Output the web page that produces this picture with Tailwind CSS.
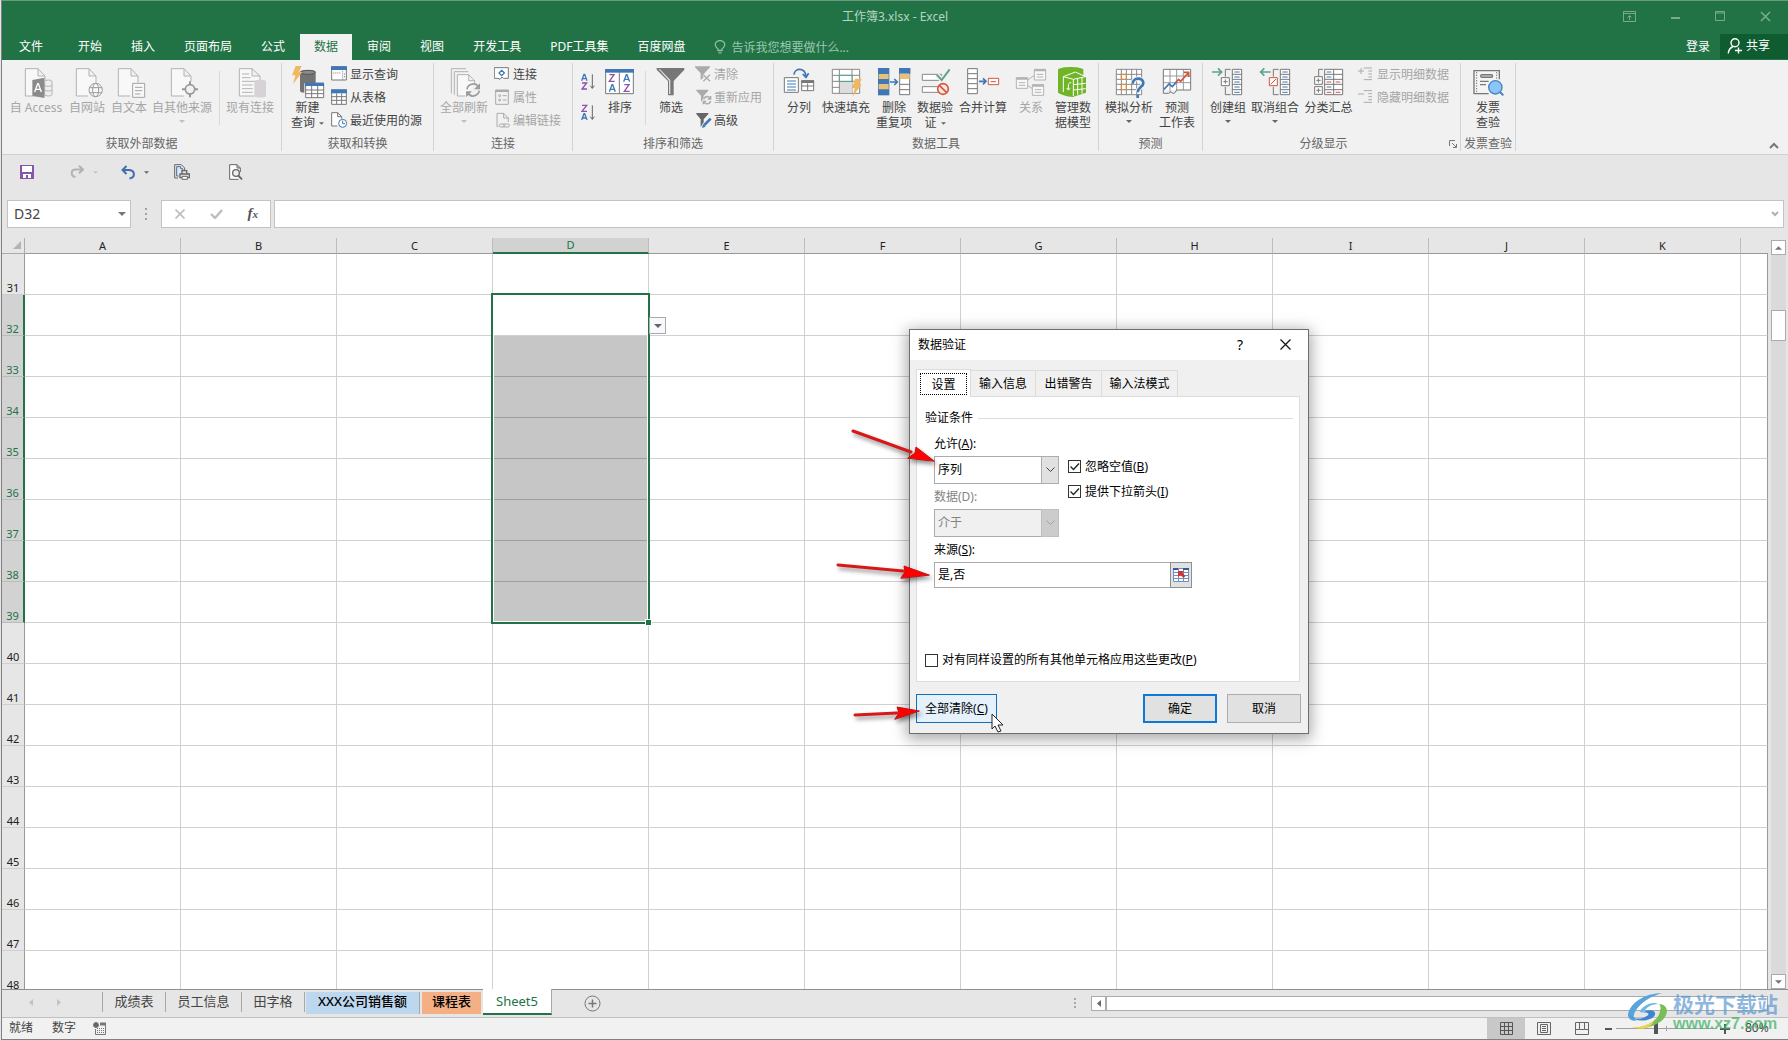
<!DOCTYPE html>
<html lang="zh-CN">
<head>
<meta charset="utf-8">
<title>工作簿3.xlsx - Excel</title>
<script src="https://cdn.jsdelivr.net/npm/@tailwindcss/browser@4"></script>
</head>
<body class="bg-[#e6e6e6] pl-px font-['Noto_Sans','Noto_Sans_CJK_SC',sans-serif] text-[12px] leading-[15px] text-[#444444]">
<div class="relative flex h-screen flex-col overflow-hidden border-b border-l border-[#808080]">

  <!-- Title bar -->
  <header class="relative flex h-[34px] shrink-0 items-center justify-end border-t border-[#6c9a80] bg-[#217346] pb-[2px] text-[#b3d5c1]">
    <h1 class="absolute inset-x-0 text-center">工作簿3.xlsx - Excel</h1>
    <div class="relative flex items-center gap-[34px] pr-[17px]">
      <button aria-label="功能区显示选项"><svg class="h-[11px] w-[13px]" viewBox="0 0 13 11" fill="none" stroke="#75ad8c"><path d="M.5.5h12v10H.5zM.5 2.5h12M6.5 9V4.500M4.500 6.500l2-2 2 2"/></svg></button>
      <button aria-label="最小化"><svg class="h-[11px] w-[11px]" viewBox="0 0 11 11" stroke="#75ad8c" stroke-width="2"><path d="M1 7h9"/></svg></button>
      <button aria-label="最大化"><svg class="h-[11px] w-[11px]" viewBox="0 0 11 11" fill="none" stroke="#75ad8c"><path d="M.5.5h9v9h-9zM.5 2h9" /></svg></button>
      <button aria-label="关闭"><svg class="h-[11px] w-[11px]" viewBox="0 0 11 11" stroke="#75ad8c" stroke-width="1.600"><path d="M1 1l9 9M10 1l-9 9"/></svg></button>
    </div>
  </header>

  <!-- Ribbon tabs -->
  <nav class="flex h-[26px] shrink-0 items-stretch gap-px bg-[#217346] text-white">
    <button class="mr-[3px] px-[17px] pb-[2px]">文件</button>
    <button class="px-[14px] pb-[2px]">开始</button>
    <button class="px-[14px] pb-[2px]">插入</button>
    <button class="px-[14px] pb-[2px]">页面布局</button>
    <button class="px-[14px] pb-[2px]">公式</button>
    <button class="bg-[#f1f1f1] px-[14px] pb-[2px] text-[#217346]">数据</button>
    <button class="px-[14px] pb-[2px]">审阅</button>
    <button class="px-[14px] pb-[2px]">视图</button>
    <button class="px-[14px] pb-[2px]">开发工具</button>
    <button class="px-[14px] pb-[2px]">PDF工具集</button>
    <button class="px-[14px] pb-[2px]">百度网盘</button>
    <button class="flex items-center gap-[5px] pl-[14px] text-[#9bc7ae]">
      <svg class="h-[14px] w-[12px]" viewBox="0 0 12 14" fill="none" stroke="#8fc0a4" stroke-width="1.300"><path d="M4 10.500V9C2.500 8 1.300 7 1.300 4.800a4.700 4.200 0 0 1 9.400 0C10.700 7 9.500 8 8 9v1.500zM4.500 12.800h3"/></svg>
      告诉我您想要做什么...</button>
    <span class="flex-1"></span>
    <button class="px-[9px] pb-[2px]">登录</button>
    <button class="mb-px flex items-center gap-[3px] bg-[#0e5c2f] pr-[18px] pb-[2px] pl-[7px]">
      <svg class="h-[16px] w-[16px]" viewBox="0 0 16 16" fill="none" stroke="#fff" stroke-width="1.400"><circle cx="8" cy="4.800" r="4"/><path d="M6 8.500C3 10 1.500 12 1.300 15.500M8 12.500h7M11.500 9.500v6"/></svg>
      共享</button>
  </nav>

  <!-- Ribbon -->
  <section class="relative flex h-[95px] shrink-0 border-b border-[#cfcfcf] bg-[#f1f1f1] py-[3px]" aria-label="数据">

    <div class="flex w-[280px] shrink-0 flex-col justify-between border-r border-[#d2d2d2]">
      <div class="flex pt-[3px] pl-[4px] text-[#a6a6a6]">
        <button class="flex w-[60px] flex-col items-center gap-[2px]">
          <svg class="size-8 overflow-visible" viewBox="60 198 96 96" fill="none" stroke="#b3b3b3" stroke-width="3"><path fill="#f8f8f8" d="M76 206h38l21 22v60H76zM114 206v22h21"/><path fill="#eee" d="M134 244c0-5 22-5 22 0v40c0 5-22 5-22 0zM134 256c4 4 18 4 22 0M134 270c4 4 18 4 22 0"/><path stroke="none" fill="#8b8b8b" d="M97 240l36-7v61l-36-7z"/><path stroke="#fff" stroke-width="4" d="M104 276l9-25h2l9 25M107 268h14"/></svg>
          <span class="whitespace-nowrap">自 Access</span></button>
        <button class="flex w-[42px] flex-col items-center gap-[2px]">
          <svg class="size-8 overflow-visible" viewBox="213 198 96 96" fill="none" stroke="#b3b3b3" stroke-width="3"><path fill="#f8f8f8" d="M264 288h-35v-82h38l21 22v20M267 206v22h21"/><circle cx="287" cy="270" r="20" fill="#f8f8f8" stroke="#9c9c9c"/><ellipse cx="287" cy="270" rx="9" ry="20" stroke="#9c9c9c"/><path stroke="#9c9c9c" d="M268 263h38M268 278h38"/></svg>
          <span>自网站</span></button>
        <button class="flex w-[42px] flex-col items-center gap-[2px]">
          <svg class="size-8 overflow-visible" viewBox="339 198 96 96" fill="none" stroke="#b3b3b3" stroke-width="3"><path fill="#f8f8f8" d="M390 288h-35v-82h38l21 22v20M393 206v22h21"/><path fill="#f8f8f8" stroke="#a3a3a3" d="M398 250h36v42h-36zM405 262h22M405 272h22M405 282h16"/></svg>
          <span>自文本</span></button>
        <button class="flex w-[64px] flex-col items-center gap-[2px]">
          <svg class="size-8 overflow-visible" viewBox="498 198 96 96" fill="none" stroke="#b3b3b3" stroke-width="3"><path fill="#f8f8f8" d="M552 288h-38v-82h38l21 22v16M552 206v22h21"/><circle cx="570" cy="268" r="14" fill="#f1f1f1" stroke="#979797" stroke-width="5"/><path stroke="#979797" stroke-width="6" d="M570 244v10M570 282v10M546 268h10M584 268h10"/></svg>
          <span class="whitespace-nowrap">自其他来源</span>
          <svg class="mt-[3px] h-[3px] w-[6px]" viewBox="0 0 6 3" fill="#c0c0c0"><path d="M0 0h6L3 3z"/></svg></button>
        <span class="mt-[5px] ml-[5px] h-[54px] w-px bg-[#d9d9d9]"></span>
        <button class="ml-[2px] flex w-[56px] flex-col items-center gap-[2px]">
          <svg class="size-8 overflow-visible" viewBox="702 198 96 96" fill="none" stroke="#b3b3b3" stroke-width="3"><path fill="#f8f8f8" d="M763 288h-45v-82h38l24 22v14M756 206v22h24M726 222h22M726 233h26M726 244h40M726 255h32M726 266h32M726 277h32"/><path stroke="none" fill="#d6d2d6" d="M763 244c0-6 35-6 35 0v44c0 6-35 6-35 0z"/></svg>
          <span>现有连接</span></button>
      </div>
      <h2 class="h-[18px] text-center leading-[22px] text-[#666]">获取外部数据</h2>
    </div>

    <div class="flex w-[152px] shrink-0 flex-col justify-between border-r border-[#d2d2d2]">
      <div class="flex">
        <button class="mt-[3px] ml-[2px] flex w-[47px] flex-col items-center gap-[2px]">
          <svg class="size-8 overflow-visible" viewBox="873 198 96 96" fill="none" stroke-width="3"><path fill="#737373" d="M897 216c0-8 47-8 47 0v34h-34v28c-8 0-13-3-13-6z"/><ellipse cx="921" cy="217" rx="22" ry="6" fill="#8b8b8b" stroke="#555"/><path fill="#f0b860" d="M884 198h18l-8 18h10l-28 36 7-26h-10z"/><path fill="#fff" stroke="#777" d="M914 250h54v43h-54zM914 270h54M914 281h54M932 258v35M950 258v35"/><path fill="#3f78b5" d="M912 248h57v10h-57z"/></svg>
          <span>新建<br>查询 <svg class="ml-px inline h-[3px] w-[5px] align-middle" viewBox="0 0 6 3" fill="#666"><path d="M0 0h6L3 3z"/></svg></span></button>
        <div class="text-[#444]">
          <button class="flex h-[23px] items-center gap-[2px]"><svg class="size-[17px]" viewBox="993 198 51 51" fill="none" stroke="#777" stroke-width="3"><path fill="#fff" d="M995 200h44v40h-44z"/><path stroke="none" fill="#3f78b5" d="M993 199h48v11h-48z"/><path stroke-dasharray="3 3" d="M1000 219h22M1028 214v26M1032 222h6M1032 230h6"/></svg>显示查询</button>
          <button class="flex h-[23px] items-center gap-[2px]"><svg class="size-[17px]" viewBox="993 267 51 51" fill="none" stroke="#777" stroke-width="3"><path fill="#fff" d="M995 270h44v43h-44zM995 290h44M995 301h44M1010 280v33M1025 280v33"/><path stroke="none" fill="#3f78b5" d="M993 268h48v12h-48z"/></svg>从表格</button>
          <button class="flex h-[23px] items-center gap-[2px]"><svg class="size-[17px]" viewBox="993 336 51 51" fill="none" stroke="#777" stroke-width="3"><path fill="#fff" d="M1012 378h-17v-40h18l12 12v6M1013 338v12h12"/><circle cx="1028" cy="370" r="12" fill="#fff" stroke="#3f78b5"/><path stroke="#3f78b5" d="M1028 362v9h7"/></svg>最近使用的源</button>
        </div>
      </div>
      <h2 class="h-[18px] text-center leading-[22px] text-[#666]">获取和转换</h2>
    </div>

    <div class="flex w-[139px] shrink-0 flex-col justify-between border-r border-[#d2d2d2]">
      <div class="flex text-[#a6a6a6]">
        <button class="mt-[3px] flex w-[60px] flex-col items-center gap-[2px]">
          <svg class="size-8 overflow-visible" viewBox="54 198 96 96" fill="none" stroke="#b3b3b3" stroke-width="3"><path d="M64 280v-74h44M73 284v-69h42"/><path fill="#f8f8f8" d="M105 288H82v-64h34l18 18v8M116 224v18h18"/><path stroke="#9c9c9c" stroke-width="5" d="M111 268c2-18 28-22 34-6M148 272c-4 18-28 22-34 6"/><path stroke="none" fill="#9c9c9c" d="M150 250v18h-18zM108 292v-18h18z"/></svg>
          <span>全部刷新</span>
          <svg class="mt-[3px] h-[3px] w-[6px]" viewBox="0 0 6 3" fill="#c0c0c0"><path d="M0 0h6L3 3z"/></svg></button>
        <div>
          <button class="flex h-[23px] items-center gap-[2px] text-[#444]"><svg class="size-[17px]" viewBox="192 198 51 51" fill="none" stroke="#777" stroke-width="3"><path fill="#fff" d="M193 203h42v32h-14l-5-4-6 7-6-3h-11z"/><path stroke="#3f78b5" stroke-width="4" d="M215 211l8 8-8 8-8-8z"/></svg>连接</button>
          <button class="flex h-[23px] items-center gap-[2px]"><svg class="size-[17px]" viewBox="192 267 51 51" fill="none" stroke="#aaa" stroke-width="3"><path d="M197 270h38v43h-38zM218 287h12M218 300h12"/><path stroke-width="6" d="M196 273h40"/><circle cx="209" cy="287" r="3"/><circle cx="209" cy="300" r="3"/></svg>属性</button>
          <button class="flex h-[23px] items-center gap-[2px]"><svg class="size-[17px]" viewBox="192 336 51 51" fill="none" stroke="#aaa" stroke-width="3"><path d="M205 380h-4v-40h20l14 14v12M221 340v14h14"/><rect x="208" y="372" width="16" height="9" rx="4"/><rect x="220" y="372" width="18" height="9" rx="4"/></svg>编辑链接</button>
        </div>
      </div>
      <h2 class="h-[18px] text-center leading-[22px] text-[#666]">连接</h2>
    </div>

    <div class="flex w-[201px] shrink-0 flex-col justify-between border-r border-[#d2d2d2]">
      <div class="flex">
        <div class="flex w-[27px] flex-col items-center gap-[13px] pt-[10px] pl-[3px]">
          <button aria-label="升序"><svg class="block h-[18px] w-[15px]" viewBox="0 0 45 54" fill="none" stroke-width="4"><path stroke="#3f78b5" d="M2 23L9 4h2l7 19M5 17h11"/><path stroke="#8c53a8" d="M3 30h14L3 48h15"/><path stroke="#666" stroke-width="3" d="M34 4v42M28 38l6 8 6-8"/></svg></button>
          <button aria-label="降序"><svg class="block h-[18px] w-[15px]" viewBox="0 0 45 54" fill="none" stroke-width="4"><path stroke="#8c53a8" d="M3 4h14L3 22h15"/><path stroke="#3f78b5" d="M2 48l7-19h2l7 19M5 42h11"/><path stroke="#666" stroke-width="3" d="M34 4v42M28 38l6 8 6-8"/></svg></button>
        </div>
        <button class="mt-[3px] flex w-[40px] flex-col items-center gap-[2px]">
          <svg class="size-8 overflow-visible" viewBox="522 198 96 96" fill="none" stroke-width="4"><path fill="#fff" stroke="#777" stroke-width="3" d="M527 210h83v71h-83zM568 218v63"/><path fill="#3f78b5" d="M525 207h87v11h-87z"/><path stroke="#8c53a8" d="M538 224h14l-14 20h16M583 254h14l-14 20h16"/><path stroke="#3f78b5" d="M538 275l8-21h2l8 21M541 268h12M581 245l8-21h2l8 21M584 238h12"/></svg>
          <span>排序</span></button>
        <span class="mt-[8px] ml-[5px] h-[54px] w-px bg-[#d9d9d9]"></span>
        <button class="mt-[3px] ml-px flex w-[48px] flex-col items-center gap-[2px]">
          <svg class="size-8 overflow-visible" viewBox="675 198 96 96" fill="#777"><path d="M680 204h83v5l-32 34v43h-17v-43l-34-34z"/><path d="M686 208l31 34v40h4v-42l-31-32z" fill="#dedede"/></svg>
          <span>筛选</span></button>
        <div class="text-[#a6a6a6]">
          <button class="flex h-[23px] items-center gap-[2px]"><svg class="size-[17px]" viewBox="795 198 51 51" fill="#aaa"><path d="M795 199h45v3l-17 18v10l-11 10v-20l-17-18z"/><path fill="none" stroke="#f1f1f1" stroke-width="9" d="M820 224l20 20M840 224l-20 20"/><path fill="none" stroke="#aaa" stroke-width="4" d="M820 224l20 20M840 224l-20 20"/></svg>清除</button>
          <button class="flex h-[23px] items-center gap-[2px]"><svg class="size-[17px]" viewBox="795 267 51 51" fill="#aaa"><path d="M799 269h36v3l-14 15v8l-8 12v-20l-14-15z"/><circle cx="831" cy="301" r="13" fill="#f1f1f1"/><path fill="none" stroke="#aaa" stroke-width="4" d="M821 298c3-11 17-11 20-2M842 303c-3 11-17 11-20 2M842 288v9h-9M820 313v-9h9"/></svg>重新应用</button>
          <button class="flex h-[23px] items-center gap-[2px] text-[#444]"><svg class="size-[17px]" viewBox="795 336 51 51" fill="#666"><path d="M799 339h36v3l-14 16v12l-9 10v-22l-13-16z"/><path fill="none" stroke="#f1f1f1" stroke-width="12" d="M820 378l20-21"/><path fill="none" stroke="#3f78b5" stroke-width="8" d="M822 376l20-20"/><path fill="#3f78b5" d="M816 384l3-11 8 7z"/></svg>高级</button>
        </div>
      </div>
      <h2 class="h-[18px] text-center leading-[22px] text-[#666]">排序和筛选</h2>
    </div>

    <div class="flex w-[325px] shrink-0 flex-col justify-between border-r border-[#d2d2d2]">
      <div class="flex items-start pt-[3px] pl-[8px]">
        <button class="flex w-[34px] flex-col items-center gap-[2px]">
          <svg class="size-8 overflow-visible" viewBox="9 198 96 96" fill="none" stroke="#777" stroke-width="3"><path fill="#fff" d="M13 233h42v44H13z"/><path stroke="#3f78b5" d="M21 243h27M21 252h27M21 261h27M21 270h27"/><path fill="#fff" d="M65 242h36v30H65zM65 258h36M83 250v22"/><path stroke-width="8" d="M64 245h38"/><path stroke="#3f78b5" stroke-width="5" d="M42 224c2-22 34-22 36 6M68 222l10 10 8-12"/></svg>
          <span>分列</span></button>
        <button class="flex w-[60px] flex-col items-center gap-[2px]">
          <svg class="size-8 overflow-visible" viewBox="150 198 96 96" fill="none" stroke="#888" stroke-width="3"><path fill="#fff" d="M157 208h82v72h-82zM157 226h82M157 244h82M157 262h82M178 208v72M216 208v72"/><path fill="#ddd" stroke="none" d="M180 246h36v33h-36z"/><path fill="#fff" stroke="#4b9a86" d="M178 226h38v18h-38z"/><path stroke="none" fill="#f0b860" d="M225 236h20l-8 18h8l-28 36 7-25h-8z"/></svg>
          <span>快速填充</span></button>
        <button class="flex w-[36px] flex-col items-center gap-[2px]">
          <svg class="size-8 overflow-visible" viewBox="294 198 96 96" fill="none" stroke-width="3"><path fill="#3f78b5" d="M294 204h34v82h-34z"/><path fill="#e8c078" d="M296 222h30v15h-30zM296 252h30v16h-30z"/><path fill="#fff" stroke="#777" d="M359 206h30v78h-30zM359 253h30M359 269h30"/><path fill="#3f78b5" d="M357 204h34v17h-34z"/><path fill="#e8c078" d="M359 222h30v15h-30z"/><path stroke="#3f78b5" stroke-width="5" d="M330 246h22M343 237l9 9-9 9"/></svg>
          <span class="whitespace-nowrap">删除<br>重复项</span></button>
        <button class="flex w-[46px] flex-col items-center gap-[2px]">
          <svg class="size-8 overflow-visible" viewBox="417 198 96 96" fill="none" stroke="#888" stroke-width="3"><path fill="#fff" d="M427 223h58v18h-58zM427 260h58v17h-58z"/><path stroke="#f1f1f1" stroke-width="14" d="M470 224l15 16 24-32"/><path stroke="#5fa28a" stroke-width="6" d="M470 224l15 16 24-32"/><circle cx="489" cy="267" r="16" fill="#f8e8e4" stroke="#d6553f" stroke-width="5"/><path stroke="#d6553f" stroke-width="5" d="M478 256l22 22"/></svg>
          <span>数据验<br>证 <svg class="ml-px inline h-[3px] w-[5px] align-middle" viewBox="0 0 6 3" fill="#666"><path d="M0 0h6L3 3z"/></svg></span></button>
        <button class="flex w-[50px] flex-col items-center gap-[2px]">
          <svg class="size-8 overflow-visible" viewBox="561 198 96 96" fill="none" stroke="#777" stroke-width="3"><path fill="#fff" d="M563 206h29v75h-29zM563 221h29M563 236h29M563 251h29M563 266h29"/><path fill="#fff" stroke="#d6553f" d="M625 235h31v19h-31zM632 245h16"/><path stroke="#3f78b5" stroke-width="5" d="M597 244h20M609 235l9 9-9 9"/></svg>
          <span>合并计算</span></button>
        <button class="flex w-[46px] flex-col items-center gap-[2px] text-[#a6a6a6]">
          <svg class="size-8 overflow-visible" viewBox="705 198 96 96" fill="none" stroke="#b3b3b3" stroke-width="3"><path d="M743 240l20-14M743 256l14 10"/><path fill="#f8f8f8" d="M709 233h34v32h-34zM763 208h34v32h-34zM757 254h34v32h-34zM716 248h20M716 256h20M770 223h20M770 231h20M764 269h20M764 277h20"/><path stroke-width="6" d="M709 236h34M763 211h34M757 257h34"/></svg>
          <span>关系</span></button>
        <button class="flex w-[38px] flex-col items-center gap-[2px]">
          <svg class="size-8 overflow-visible" viewBox="831 198 96 96" fill="none" stroke="#fff" stroke-width="3"><path stroke="none" fill="#6fb526" d="M834 208c14-9 62-9 76 0v18l8 6v46l-40 13c-18-2-34-7-44-13z"/><path d="M850 276v-46l36-14 31 14M850 230l30 8v50M880 238l36-8M880 254l37-4M880 270l37-4M893 236v48M906 233v48"/><path d="M874 248c-8 0-9 4-9 10v10M860 264l5 6 6-5"/></svg>
          <span class="whitespace-nowrap">管理数<br>据模型</span></button>
      </div>
      <h2 class="h-[18px] text-center leading-[22px] text-[#666]">数据工具</h2>
    </div>

    <div class="flex w-[104px] shrink-0 flex-col justify-between border-r border-[#d2d2d2]">
      <div class="flex items-start pt-[3px] pl-[3px]">
        <button class="flex w-[54px] flex-col items-center gap-[2px]">
          <svg class="size-8 overflow-visible" viewBox="999 198 96 96" fill="none" stroke="#888" stroke-width="3"><path fill="#fff" d="M1009 208h76v76h-76zM1009 223h76M1009 238h76M1009 253h76M1009 269h76M1024 208v76M1039 208v76M1055 208v76M1070 208v76"/><path stroke="#e08a35" d="M1024 223h15v15h-15zM1024 253h15v16h-15z"/><path stroke="#f1f1f1" stroke-width="14" d="M1058 251c0-20 32-20 32-2 0 12-17 13-17 28"/><path stroke="#3f78b5" stroke-width="8" d="M1058 251c0-20 32-20 32-2 0 12-17 13-17 28M1073 284v10"/></svg>
          <span>模拟分析</span>
          <svg class="mt-[3px] h-[3px] w-[6px]" viewBox="0 0 6 3" fill="#666"><path d="M0 0h6L3 3z"/></svg></button>
        <button class="flex w-[42px] flex-col items-center gap-[2px]">
          <svg class="size-8 overflow-visible" viewBox="1143 198 96 96" fill="none" stroke="#999" stroke-width="3"><path fill="#fff" stroke="none" d="M1150 208h82v62h-82z"/><path d="M1150 228h82M1150 248h82M1170 208v70M1190 208v66M1210 208v62"/><path stroke="#777" d="M1194 270h38v-62h-82v72h16l6-4 10 5 8-11h4"/><path stroke="#3f78b5" stroke-width="5" d="M1152 268l15-16 10 8 14-16"/><path stroke="#d6553f" stroke-width="5" d="M1188 246l8-8 6 6 22-24M1212 217h14v14"/></svg>
          <span class="whitespace-nowrap">预测<br>工作表</span></button>
      </div>
      <h2 class="h-[18px] text-center leading-[22px] text-[#666]">预测</h2>
    </div>

    <div class="flex w-[258px] shrink-0 flex-col justify-between border-r border-[#d2d2d2]">
      <div class="flex items-start pl-[3px]">
        <button class="mt-[3px] flex w-[44px] flex-col items-center gap-[2px]">
          <svg class="size-8 overflow-visible" viewBox="366 198 96 96" fill="none" stroke="#777" stroke-width="3"><path fill="#fff" d="M427 208h28v76h-28zM427 223h28M427 238h28M427 253h28M427 269h28"/><path stroke="#3f78b5" d="M433 216h16M433 231h16M433 246h16M433 261h16M433 277h16"/><path d="M422 208h-16v22M406 260v24h16"/><path fill="#fff" d="M394 233h24v24h-24zM400 245h13M406 238v13"/><path stroke="#5fa28a" stroke-width="5" d="M366 216h28M384 205l11 11-11 11"/></svg>
          <span>创建组</span>
          <svg class="mt-[3px] h-[3px] w-[6px]" viewBox="0 0 6 3" fill="#666"><path d="M0 0h6L3 3z"/></svg></button>
        <button class="mt-[3px] flex w-[50px] flex-col items-center gap-[2px]">
          <svg class="size-8 overflow-visible" viewBox="507 198 96 96" fill="none" stroke="#777" stroke-width="3"><path fill="#fff" d="M571 208h28v76h-28zM571 223h28M571 238h28M571 253h28M571 269h28"/><path stroke="#3f78b5" d="M577 216h16M577 231h16M577 246h16M577 261h16M577 277h16"/><path d="M566 208h-16v22M550 260v24h16"/><path fill="#fff" stroke="#d6553f" d="M538 233h24v24h-24zM542 253l16-16"/><path stroke="#5fa28a" stroke-width="5" d="M512 216h30M523 205l-11 11 11 11"/></svg>
          <span class="whitespace-nowrap">取消组合</span>
          <svg class="mt-[3px] h-[3px] w-[6px]" viewBox="0 0 6 3" fill="#666"><path d="M0 0h6L3 3z"/></svg></button>
        <button class="mt-[3px] flex w-[57px] flex-col items-center gap-[2px]">
          <svg class="size-8 overflow-visible" viewBox="666 198 96 96" fill="none" stroke="#777" stroke-width="3"><path fill="#fff" d="M701 208h54v76h-54zM701 223h54M701 238h54M701 253h54M701 269h54M728 208v76"/><path stroke="#3f78b5" d="M707 216h14M707 231h14M707 261h14"/><path stroke="#d6553f" d="M707 246h14M734 246h14M707 277h14M734 277h14"/><path d="M696 208h-13v20"/><path fill="#fff" d="M671 230h23v23h-23zM671 260h23v23h-23zM676 241h13M682 235v13M676 271h13M682 265v13"/></svg>
          <span>分类汇总</span></button>
        <div class="text-[#a6a6a6]">
          <button class="flex h-[23px] items-center gap-[3px]"><svg class="size-[17px]" viewBox="804 198 51 51" fill="none" stroke="#aaa" stroke-width="3"><path d="M807 213h18M816 204v18M824 204h25M838 213h11M838 222h11M838 231h11M824 239h25"/></svg>显示明细数据</button>
          <button class="flex h-[23px] items-center gap-[3px]"><svg class="size-[17px]" viewBox="804 267 51 51" fill="none" stroke="#aaa" stroke-width="3"><path d="M807 282h18M824 272h25M838 281h11M838 290h11M838 299h11M824 307h25"/></svg>隐藏明细数据</button>
        </div>
      </div>
      <div class="flex items-center pr-[3px]">
        <h2 class="h-[18px] flex-1 pr-[5px] text-center leading-[22px] text-[#666]">分级显示</h2>
        <button aria-label="分级显示设置"><svg class="mt-[3px] h-[8px] w-[8px]" viewBox="0 0 8 8" fill="none" stroke="#777"><path d="M.5 6V.5H6M3 3l4 4M7.500 4v3.500H4"/></svg></button>
      </div>
    </div>

    <div class="flex w-[55px] shrink-0 flex-col justify-between border-r border-[#d2d2d2]">
      <button class="mt-[3px] flex flex-col items-center gap-[2px]">
        <svg class="size-8 overflow-visible" viewBox="96 198 96 96" fill="none" stroke="#777" stroke-width="4"><path fill="#f4f4f4" d="M146 281h-44v-69h76v26"/><path stroke-dasharray="4 4" stroke-width="3" d="M110 216v62M170 216v20"/><rect x="122" y="224" width="36" height="8" rx="4" fill="#bbb"/><path d="M120 244h26M120 254h18"/><circle cx="166" cy="262" r="20" fill="#8cc6f8" stroke="#4684bd"/><path stroke="#4684bd" stroke-width="6" d="M180 276l10 10"/></svg>
        <span>发票<br>查验</span></button>
      <h2 class="h-[18px] text-center leading-[22px] whitespace-nowrap text-[#666]">发票查验</h2>
    </div>
    <span class="flex-1"></span>
    <button class="mr-[9px] mb-px self-end" aria-label="折叠功能区"><svg class="block h-[9px] w-[10px]" viewBox="0 0 10 9" fill="none" stroke="#777" stroke-width="2"><path d="M1 7l4-4 4 4"/></svg></button>
  </section>

  <!-- Quick access toolbar -->
  <div class="flex h-[45px] shrink-0 items-center pb-[11px] pl-[18px]">
    <button aria-label="保存"><svg class="block h-[14px] w-[14px]" viewBox="0 0 14 14" fill="#8457a8"><path d="M0 0h14v14H0z"/><path fill="#fff" d="M2 1h10v6H2zM3 9h8v4H8v-3H6v3H3z"/></svg></button>
    <button class="ml-[36px]" aria-label="重做"><svg class="block h-[14px] w-[14px]" viewBox="0 0 14 14" fill="none" stroke="#b3b3b3" stroke-width="2"><path d="M13 4.500H5.500c-5 0-5 7 0 7.500M9 .7l4 3.800-4 3.800"/></svg></button>
    <svg class="ml-[9px] h-[3px] w-[5px]" viewBox="0 0 6 3" fill="#c4c4c4"><path d="M0 0h6L3 3z"/></svg>
    <button class="ml-[23px]" aria-label="撤消"><svg class="block h-[15px] w-[14px]" viewBox="0 0 14 15" fill="none" stroke="#3f6fae" stroke-width="2"><path d="M1 5h6.500c7 0 7 7.500 1 8.500M5.500 1L1.500 5l4 4"/></svg></button>
    <svg class="ml-[9px] h-[3px] w-[5px]" viewBox="0 0 6 3" fill="#666"><path d="M0 0h6L3 3z"/></svg>
    <button class="ml-[25px]" aria-label="快速打印"><svg class="block h-[17px] w-[16px]" viewBox="0 0 48 51" fill="none" stroke="#666" stroke-width="3"><path d="M12 42H2V2h20l10 10v6"/><path stroke="#3f6fae" d="M14 36H8V8h12v6h6v6"/><path fill="#e6e6e6" stroke-width="4" d="M24 20h14v10H24zM18 30h28v11H18z"/><path fill="#fff" d="M24 37h16v9H24z"/></svg></button>
    <button class="ml-[39px]" aria-label="打印预览"><svg class="block h-[17px] w-[14px]" viewBox="0 0 42 51" fill="none" stroke="#666" stroke-width="3"><path fill="#fff" d="M28 46H2V2h22l10 10v12M24 2v10h10"/><circle cx="21" cy="27" r="10" fill="#eee" stroke-width="4"/><path stroke-width="6" d="M28 35l11 11"/></svg></button>
  </div>

  <!-- Formula bar -->
  <div class="mb-[10px] flex h-[28px] shrink-0 items-stretch pr-[4px] pl-[5px]">
    <div class="flex w-[124px] items-center justify-between border border-[#c3c3c3] bg-white pr-[4px]">
      <input class="w-[106px] pb-[2px] pl-[6px] text-[14px] outline-none" aria-label="名称框" value="D32">
      <svg class="h-[4px] w-[8px]" viewBox="0 0 8 4" fill="#777"><path d="M0 0h8L4 4z"/></svg>
    </div>
    <svg class="mx-[14px] h-[12px] w-[2px] self-center" viewBox="0 0 2 12" fill="#a0a0a0"><path d="M0 0h2v2H0zM0 5h2v2H0zM0 10h2v2H0z"/></svg>
    <div class="flex w-[110px] items-center justify-between border border-[#c3c3c3] bg-white pr-[12px] pl-[13px]">
      <button aria-label="取消输入"><svg class="block h-[10px] w-[10px]" viewBox="0 0 10 10" stroke="#bdbdbd" stroke-width="1.600"><path d="M.5.5l9 9M9.500.5l-9 9"/></svg></button>
      <button aria-label="输入"><svg class="block h-[10px] w-[13px]" viewBox="0 0 13 10" fill="none" stroke="#bdbdbd" stroke-width="2.400"><path d="M1 5l4 4 7-8"/></svg></button>
      <button class="font-['Liberation_Serif',serif] text-[15px] font-bold text-[#555] italic">f<span class="text-[11px]">x</span></button>
    </div>
    <div class="ml-[3px] flex flex-1 items-center border border-[#c3c3c3] bg-white pr-[4px]">
      <input class="flex-1 px-[6px] outline-none" aria-label="编辑栏">
      <svg class="h-[6px] w-[8px]" viewBox="0 0 8 6" fill="none" stroke="#b0b0b0" stroke-width="2"><path d="M1 1l3 3 3-3"/></svg>
    </div>
  </div>

  <!-- Worksheet -->
  <main class="relative flex min-h-0 flex-1 overflow-hidden">
    <div class="relative min-w-0 flex-1 overflow-hidden">
      <table class="w-full table-fixed border-separate border-spacing-0 text-[11px] text-[#222]">
        <thead>
          <tr id="columns">
            <th class="h-[16px] w-[23px] border-r border-b border-[#ababab] p-0"><svg class="mb-[2px] ml-auto mr-[3px] h-[8px] w-[8px]" viewBox="0 0 8 8" fill="#b4b4b4"><path d="M8 0v8H0z"/></svg></th>
          </tr>
        </thead>
        <tbody id="rows"></tbody>
      </table>

      <!-- Selection D32:D39 -->
      <div class="pointer-events-none absolute top-[55px] left-[489px] h-[331px] w-[159px] border-2 border-[#217346] shadow-[inset_0_0_0_1px_#fff]">
        <span class="absolute -right-[4px] -bottom-[4px] size-[7px] border border-white bg-[#217346]"></span>
      </div>
      <button class="absolute top-[79px] left-[647px] flex size-[17px] items-center justify-center border border-[#ababab] bg-[#f8f9fc]" aria-label="下拉列表"><svg class="h-[4px] w-[8px]" viewBox="0 0 8 4" fill="#666"><path d="M0 0h8L4 4z"/></svg></button>
    </div>

    <!-- Vertical scroll bar -->
    <div class="flex w-[20px] shrink-0 flex-col pt-[2px] pr-[2px] pl-[3px]">
      <button class="flex h-[15px] items-center justify-center border border-[#ababab] bg-white" aria-label="向上"><svg class="h-[4px] w-[7px]" viewBox="0 0 8 4" fill="#777"><path d="M0 4h8L4 0z"/></svg></button>
      <div class="flex-1 bg-[#dadada] pt-[55px]"><div class="h-[31px] border border-[#ababab] bg-white"></div></div>
      <button class="flex h-[15px] items-center justify-center border border-[#ababab] bg-white" aria-label="向下"><svg class="h-[4px] w-[7px]" viewBox="0 0 8 4" fill="#777"><path d="M0 0h8L4 4z"/></svg></button>
    </div>

    <!-- Data validation dialog -->
    <form class="absolute top-[91px] left-[907px] flex h-[405px] w-[400px] flex-col border border-[#6e6e6e] bg-[#f0f0f0] text-black shadow-[0_3px_14px_2px_rgba(0,0,0,0.350)]" role="dialog" aria-label="数据验证" onsubmit="return false">
      <div class="flex h-[30px] items-center bg-white pr-px pb-[2px] pl-[8px]">
        <h2 class="flex-1">数据验证</h2>
        <button type="button" class="w-[46px] text-[14px]" aria-label="帮助">?</button>
        <button type="button" class="flex w-[44px] justify-center" aria-label="关闭对话框"><svg class="h-[11px] w-[11px]" viewBox="0 0 11 11" stroke="#111" stroke-width="1.200"><path d="M.5.5l10 10M10.500.5l-10 10"/></svg></button>
      </div>
      <div class="flex flex-1 flex-col pt-[9px] pr-[7px] pb-[10px] pl-[6px]">
        <div class="flex items-end pr-px" role="tablist">
          <button type="button" role="tab" class="relative -mb-px h-[28px] w-[55px] border border-b-0 border-[#dcdcdc] bg-white p-[3px]"><span class="flex h-[22px] items-center justify-center border border-dotted border-black">设置</span></button>
          <button type="button" role="tab" class="h-[26px] w-[65px] border-t border-r border-[#dcdcdc]">输入信息</button>
          <button type="button" role="tab" class="h-[26px] w-[66px] border-t border-r border-[#dcdcdc]">出错警告</button>
          <button type="button" role="tab" class="h-[26px] w-[76px] border-t border-r border-[#dcdcdc]">输入法模式</button>
        </div>
        <div class="mr-px flex h-[286px] flex-col border border-[#dcdcdc] bg-white pt-[12px] pr-[6px] pb-[12px] pl-[8px] leading-[18px]">
          <div class="flex items-center gap-[5px]"><h3>验证条件</h3><span class="h-px flex-1 bg-[#dcdcdc]"></span></div>
          <div class="mt-[8px] flex pl-[9px]">
            <div class="flex w-[125px] flex-col">
              <label for="allow">允许(<u>A</u>):</label>
              <div class="relative mt-[3px]">
                <select id="allow" class="block h-[28px] w-full appearance-none border border-[#ababab] bg-white pl-[3px]"><option>序列</option></select>
                <span class="pointer-events-none absolute inset-y-0 right-0 flex w-[18px] items-center justify-center border border-[#adadad] bg-[#e1e1e1]"><svg class="h-[6px] w-[9px]" viewBox="0 0 9 6" fill="none" stroke="#444"><path d="M.5.5l4 4 4-4"/></svg></span>
              </div>
              <label for="data" class="mt-[4px] text-[#838383]">数据(D):</label>
              <div class="relative mt-[3px]">
                <select id="data" disabled class="block h-[28px] w-full appearance-none border border-[#ababab] bg-[#f0f0f0] pl-[3px] text-[#838383] opacity-100"><option>介于</option></select>
                <span class="pointer-events-none absolute inset-y-0 right-0 flex w-[18px] items-center justify-center border border-[#bfbfbf] bg-[#cccccc]"><svg class="h-[6px] w-[9px]" viewBox="0 0 9 6" fill="none" stroke="#a0a0a0"><path d="M.5.5l4 4 4-4"/></svg></span>
              </div>
              <label for="source" class="mt-[4px]">来源(<u>S</u>):</label>
            </div>
            <div class="pt-[19px] pl-[9px]">
              <label class="flex h-[25px] items-center gap-[4px]"><span class="grid size-[13px]"><input type="checkbox" checked class="col-start-1 row-start-1 size-[13px] appearance-none border border-[#333] bg-white"><svg class="pointer-events-none col-start-1 row-start-1 size-[13px]" viewBox="0 0 13 13" fill="none" stroke="#222" stroke-width="1.300"><path d="M2.500 6.500l3 3 5.500-6"/></svg></span><span>忽略空值(<u>B</u>)</span></label>
              <label class="flex h-[25px] items-center gap-[4px]"><span class="grid size-[13px]"><input type="checkbox" checked class="col-start-1 row-start-1 size-[13px] appearance-none border border-[#333] bg-white"><svg class="pointer-events-none col-start-1 row-start-1 size-[13px]" viewBox="0 0 13 13" fill="none" stroke="#222" stroke-width="1.300"><path d="M2.500 6.500l3 3 5.500-6"/></svg></span><span>提供下拉箭头(<u>I</u>)</span></label>
            </div>
          </div>
          <div class="mt-[3px] ml-[9px] flex h-[26px] w-[258px] border border-[#ababab]">
            <input id="source" class="min-w-0 flex-1 pl-[3px] outline-none" value="是,否">
            <button type="button" class="-my-px -mr-px flex w-[22px] items-center justify-center border border-[#8f8f8f] bg-[#e1e1e1]" aria-label="选择区域"><svg class="h-[14px] w-[16px]" viewBox="0 0 16 14"><path fill="#fff" stroke="#6c8fc4" d="M.5.5h15v13H.5zM.5 4.500h15M.5 7.500h15M.5 10.500h15M5.500.5v13M10.500.5v13"/><path fill="#34599c" d="M0 0h5v2H0zM10 0h6v2h-6z"/><path fill="#d8332a" d="M5 3h6L9.500 5l3 3-2 2-3-3L5 9z"/></svg></button>
          </div>
          <label class="mt-auto flex items-center gap-[4px]"><input type="checkbox" class="size-[13px] appearance-none border border-[#333] bg-white"><span>对有同样设置的所有其他单元格应用这些更改(<u>P</u>)</span></label>
        </div>
        <div class="mt-auto flex gap-[10px]">
          <button type="button" class="mr-auto h-[29px] w-[81px] border border-[#0f6fc0] bg-[#e5f1fb]">全部清除(<u>C</u>)</button>
          <button class="h-[29px] w-[74px] border-2 border-[#0f78d4] bg-[#e1e1e1]">确定</button>
          <button type="button" class="h-[29px] w-[74px] border border-[#adadad] bg-[#e1e1e1]">取消</button>
        </div>
      </div>
    </form>

    <!-- Callout arrows and mouse pointer -->
    <svg class="pointer-events-none absolute top-[182px] left-[828px] h-[320px] w-[180px]" viewBox="830 420 180 320" aria-hidden="true">
      <g class="drop-shadow-[2px_3px_2px_rgba(0,0,0,0.450)]" fill="#ff0000" stroke="#d81818" stroke-width="3" stroke-linecap="round">
        <path d="M853 431l58 21M838 565l65 6M855 715l42-2"/>
        <path stroke="#c01010" stroke-width="1" d="M934 461l-18-14-1 6-7 5zM929 575l-25-9 1 6-4 6zM919 711l-22-4 2 6-4 6z"/>
      </g>
      <path fill="#fff" stroke="#222" d="M992 714v15l3-3 3 6 3-1-3-6h5z"/>
    </svg>
  </main>

  <!-- Sheet tabs -->
  <div class="relative flex h-[29px] shrink-0 items-start border-t border-b border-t-[#8f8f8f] border-b-[#c0c0c0] text-[13px]">
    <div class="flex h-[24px] w-[100px] items-center gap-[24px] pl-[27px]">
      <svg class="h-[7px] w-[4px]" viewBox="0 0 4 7" fill="#c2c2c2"><path d="M4 0v7L0 3.500z"/></svg>
      <svg class="h-[7px] w-[4px]" viewBox="0 0 4 7" fill="#c2c2c2"><path d="M0 0v7l4-3.500z"/></svg>
    </div>
    <div class="flex items-start">
      <button class="mt-[2px] h-[20px] w-[64px] border-r border-l border-[#a8a8a8] pb-[2px]">成绩表</button>
      <button class="mt-[2px] h-[20px] w-[76px] border-r border-[#a8a8a8] pb-[2px]">员工信息</button>
      <button class="mt-[2px] h-[20px] w-[63px] border-r border-[#a8a8a8] pb-[2px]">田字格</button>
      <button class="mt-[2px] ml-px h-[22px] w-[114px] border-r border-[#a8a8a8] bg-[#bdd7ee] pb-[4px] font-medium text-black">XXX公司销售额</button>
      <button class="mt-[2px] ml-[2px] h-[22px] w-[59px] bg-[#f4b084] pb-[4px] font-medium text-black">课程表</button>
      <button class="-mt-px ml-[2px] h-[26px] w-[69px] border-r border-b-2 border-r-[#a8a8a8] border-b-[#217346] bg-white text-[#217346]">Sheet5</button>
    </div>
    <button class="ml-[32px] mt-[5px]" aria-label="新工作表"><svg class="block size-[17px]" viewBox="0 0 17 17" fill="none" stroke="#777"><circle cx="8.500" cy="8.500" r="7.500"/><path stroke-width="1.500" d="M8.500 4.500v8M4.500 8.500h8"/></svg></button>
    <div class="ml-auto flex items-center pt-[6px] pr-[20px]">
      <svg class="mr-[15px] h-[11px] w-[2px]" viewBox="0 0 2 11" fill="#a8a8a8"><path d="M0 0h2v2H0zM0 4h2v2H0zM0 8h2v2H0z"/></svg>
      <button class="flex h-[15px] w-[15px] items-center justify-center border border-[#ababab] bg-white" aria-label="向左"><svg class="h-[7px] w-[4px]" viewBox="0 0 4 7" fill="#666"><path d="M4 0v7L0 3.500z"/></svg></button>
      <div class="h-[15px] w-[662px] border border-[#ababab] bg-white"></div>
    </div>
  </div>

  <!-- Status bar -->
  <footer class="flex h-[21px] shrink-0 items-center bg-[#f1f1f1] pl-[7px]">
    <span class="pb-[2px]">就绪</span>
    <span class="ml-[19px] pb-[2px]">数字</span>
    <svg class="ml-[17px] h-[13px] w-[13px]" viewBox="0 0 13 13" fill="none" stroke="#777"><path d="M7 2.500h5.500v10h-10V7"/><path d="M7 2h6" stroke-width="3"/><circle cx="3" cy="3" r="2.500" fill="#666"/><path stroke-dasharray="1 1" d="M4 6.500h7M4 8.500h7M4 10.500h7"/></svg>
    <span class="flex-1"></span>
    <button class="flex h-full w-[38px] items-center justify-center bg-[#c8c8c8]" aria-label="普通"><svg class="size-[13px]" viewBox="0 0 13 13" fill="none" stroke="#555"><path d="M.5.5h12v12H.5zM.5 4.500h12M.5 8.500h12M4.500.5v12M8.500.5v12"/></svg></button>
    <button class="flex w-[38px] justify-center" aria-label="页面布局视图"><svg class="h-[13px] w-[14px]" viewBox="0 0 14 13" fill="none" stroke="#666"><path d="M.5.5h13v12H.5zM3.500 2.500h7v8h-7zM5 4.500h4M5 6.500h4M5 8.500h4"/></svg></button>
    <button class="flex w-[38px] justify-center" aria-label="分页预览"><svg class="h-[13px] w-[14px]" viewBox="0 0 14 13" fill="none" stroke="#666"><path d="M.5.5h13v12H.5zM4.500.5v7h5v-7M.5 7.500h4M9.500 7.500h4"/></svg></button>
    <div class="ml-[4px] flex items-center">
      <button aria-label="缩小"><svg class="block h-[10px] w-[7px]" viewBox="0 0 7 10"><path d="M0 4h7v2H0z" fill="#555"/></svg></button>
      <svg class="mx-[4px] h-[11px] w-[100px]" viewBox="0 0 100 11"><path d="M0 5h100v1H0zM50 3h1v5h-1z" fill="#a0a0a0"/><path d="M38 0h4v11h-4z" fill="#555"/></svg>
      <button aria-label="放大"><svg class="block h-[10px] w-[10px]" viewBox="0 0 10 10"><path d="M0 4h4V0h2v4h4v2H6v4H4V6H0z" fill="#555"/></svg></button>
    </div>
    <span class="w-[58px] pb-[2px] pl-[15px]">80%</span>
  </footer>

  <!-- Download-site watermark -->
  <div class="pointer-events-none absolute right-[10px] bottom-[7px] flex items-center gap-[3px]">
    <svg class="h-[40px] w-[44px]" viewBox="0 0 132 120" aria-hidden="true"><path fill="#58a5dc" d="M108 4C62 2 14 30 6 66c-2 14 10 22 26 20-14-8-10-24 6-42C58 22 84 10 108 4z"/><path fill="#3b86cf" d="M8 62c4 22 38 30 66 18 10-4 16-12 12-20-8-8-26-6-34 2 12-2 18 2 14 8C48 84 14 84 8 62z"/><path fill="#79bd55" d="M100 36c34 4 28 40-4 58-20 12-46 18-70 16 30-6 62-20 72-40 6-14 8-24 2-34z"/><path fill="#f1d24b" d="M18 106c22 0 48-6 66-20-8 22-36 30-66 20z"/><path fill="#6db7e4" d="M42 56C56 36 86 26 98 38c-16-4-34 6-42 18-4 6-14 8-14 0z"/></svg>
    <div class="flex flex-col">
      <span class="text-[21px] leading-[22px] font-bold text-[#5b97d2]/70">极光下载站</span>
      <span class="font-['Liberation_Sans',sans-serif] text-[16px] leading-[17px] font-bold text-[#45b36b]/75">www.xz7.com</span>
    </div>
  </div>
</div>

<script>
  const columns = ['A', 'B', 'C', 'D', 'E', 'F', 'G', 'H', 'I', 'J', 'K', ''];
  const columnClass = 'h-[16px] w-[156px] border-r border-b border-r-[#bdbdbd] border-b-[#999999] p-0 font-normal leading-[14px]';
  const columnSelected = 'h-[16px] w-[156px] border-r border-b-2 border-r-[#bdbdbd] border-b-[#217346] bg-[#d2d2d2] p-0 font-normal leading-[14px] text-[#217346]';
  const columnLast = 'h-[16px] border-b border-[#999999] p-0';
  const rowClass = 'h-[41px] border-r border-b border-r-[#999999] border-b-[#cfcfcf] p-0 align-bottom font-normal leading-[13px]';
  const rowSelected = 'h-[41px] border-r-2 border-b border-r-[#217346] border-b-[#bcbcbc] bg-[#d2d2d2] p-0 align-bottom font-normal leading-[13px] text-[#217346]';
  const cellClass = 'border-r border-b border-[#d0d0d0] bg-white p-0';
  const cellSelected = 'border-r border-b border-[#9e9e9e] bg-[#c6c6c6] p-0';
  const cellLast = 'border-r border-b border-r-[#999999] border-b-[#d0d0d0] bg-white p-0';

  const add = (parent, tag, cls, text) => {
    const el = document.createElement(tag);
    el.className = cls;
    el.textContent = text;
    parent.append(el);
  };
  const head = document.getElementById('columns');
  for (const c of columns) add(head, 'th', c === 'D' ? columnSelected : c ? columnClass : columnLast, c);
  for (let r = 31; r <= 48; r++) {
    const tr = document.createElement('tr');
    add(tr, 'th', r >= 32 && r <= 39 ? rowSelected : rowClass, r);
    for (const c of columns) add(tr, 'td', c === 'D' && r >= 33 && r <= 39 ? cellSelected : c ? cellClass : cellLast, '');
    document.getElementById('rows').append(tr);
  }
</script>
</body>
</html>
